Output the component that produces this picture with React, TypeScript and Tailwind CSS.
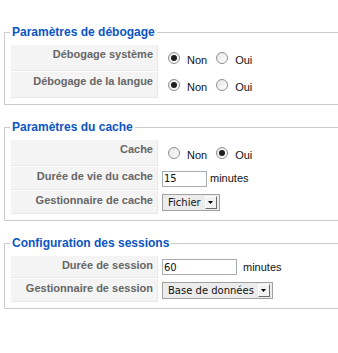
import React from "react";

const Radio = ({ checked }: { checked?: boolean }) => (
  <span className="w-[12px] h-[12px] rounded-full border border-[#8e8f8f] bg-gradient-to-br from-[#e6e6e6] to-white flex items-center justify-center shrink-0">
    {checked && <span className="w-[6px] h-[6px] rounded-full bg-[#1e1e1e]" />}
  </span>
);

const RadioPair = ({ yes }: { yes: boolean }) => (
  <div className="flex items-center h-full pl-[6px] text-[11px] leading-[13px] text-[#111] font-['Liberation_Sans',Arial,sans-serif]">
    <Radio checked={!yes} />
    <span className="pt-[4px] ml-[7px]">Non</span>
    <span className="ml-[9px]">
      <Radio checked={yes} />
    </span>
    <span className="pt-[4px] ml-[7px]">Oui</span>
  </div>
);

const TextInput = ({ value, w }: { value: string; w: string }) => (
  <div
    className={`${w} h-[16px] border border-[#a5acb2] bg-white pl-[1px] flex items-center text-[10px] text-[#111] font-['DejaVu_Sans',sans-serif]`}
  >
    {value}
  </div>
);

const Select = ({ value }: { value: string }) => (
  <div className="h-[17px] border border-[#a0a0a0] bg-[#ececec] pl-[5px] pr-[2px] flex items-center text-[10px] text-[#111] font-['DejaVu_Sans',sans-serif]">
    <span>{value}</span>
    <span className="ml-[4px] w-[12px] h-[13px] bg-[#f2f2f2] border-t border-l border-t-white border-l-white border-b border-r border-b-[#6b6b6b] border-r-[#6b6b6b] flex items-center justify-center">
      <svg width="5" height="3" viewBox="0 0 5 3">
        <polygon points="0,0 5,0 2.5,3" fill="#000" />
      </svg>
    </span>
  </div>
);

const Row = ({ label, h, children }: { label: string; h: string; children: React.ReactNode }) => (
  <div className={`flex ${h}`}>
    <div className="w-[147px] shrink-0 bg-[#f4f4f4] border-b border-r border-[#e9e9e9] text-right pr-[4px] pt-[3px] text-[11px] leading-[13px] font-bold text-[#666] font-['Liberation_Sans',Arial,sans-serif]">
      {label}
    </div>
    <div className="ml-[1px] pl-[3px] flex-1 flex items-center">{children}</div>
  </div>
);

const Section = ({ title, children, className }: { title: string; children: React.ReactNode; className?: string }) => (
  <fieldset className={`border border-[#cccccc] pl-[5px] pb-[5px] ${className ?? ""}`}>
    <legend className="px-[2px] text-[12px] leading-[16px] font-bold text-[#0b55c4] font-['Liberation_Sans',Arial,sans-serif]">
      {title}
    </legend>
    <div className="pt-[5px] pb-[1px] pl-[1px] flex flex-col gap-[1px]">{children}</div>
  </fieldset>
);

export default function App() {
  return (
    <div className="w-[338px] h-[353px] bg-white overflow-hidden">
      <div className="w-[370px] pl-[4px] pt-[24px]">
        <Section title="Paramètres de débogage">
          <Row label="Débogage système" h="h-[26px]">
            <RadioPair yes={false} />
          </Row>
          <Row label="Débogage de la langue" h="h-[26px]">
            <RadioPair yes={false} />
          </Row>
        </Section>
        <Section title="Paramètres du cache" className="mt-[14px]">
          <Row label="Cache" h="h-[26px]">
            <RadioPair yes={true} />
          </Row>
          <Row label="Durée de vie du cache" h="h-[23px]">
            <TextInput value="15" w="w-[45px]" />
            <span className="ml-[3px] text-[11px] text-[#111] font-['Liberation_Sans',Arial,sans-serif]">minutes</span>
          </Row>
          <Row label="Gestionnaire de cache" h="h-[23px]">
            <Select value="Fichier" />
          </Row>
        </Section>
        <Section title="Configuration des sessions" className="mt-[14px]">
          <Row label="Durée de session" h="h-[22px]">
            <TextInput value="60" w="w-[75px]" />
            <span className="ml-[6px] text-[11px] text-[#111] font-['Liberation_Sans',Arial,sans-serif]">minutes</span>
          </Row>
          <Row label="Gestionnaire de session" h="h-[23px]">
            <Select value="Base de données" />
          </Row>
        </Section>
      </div>
    </div>
  );
}
